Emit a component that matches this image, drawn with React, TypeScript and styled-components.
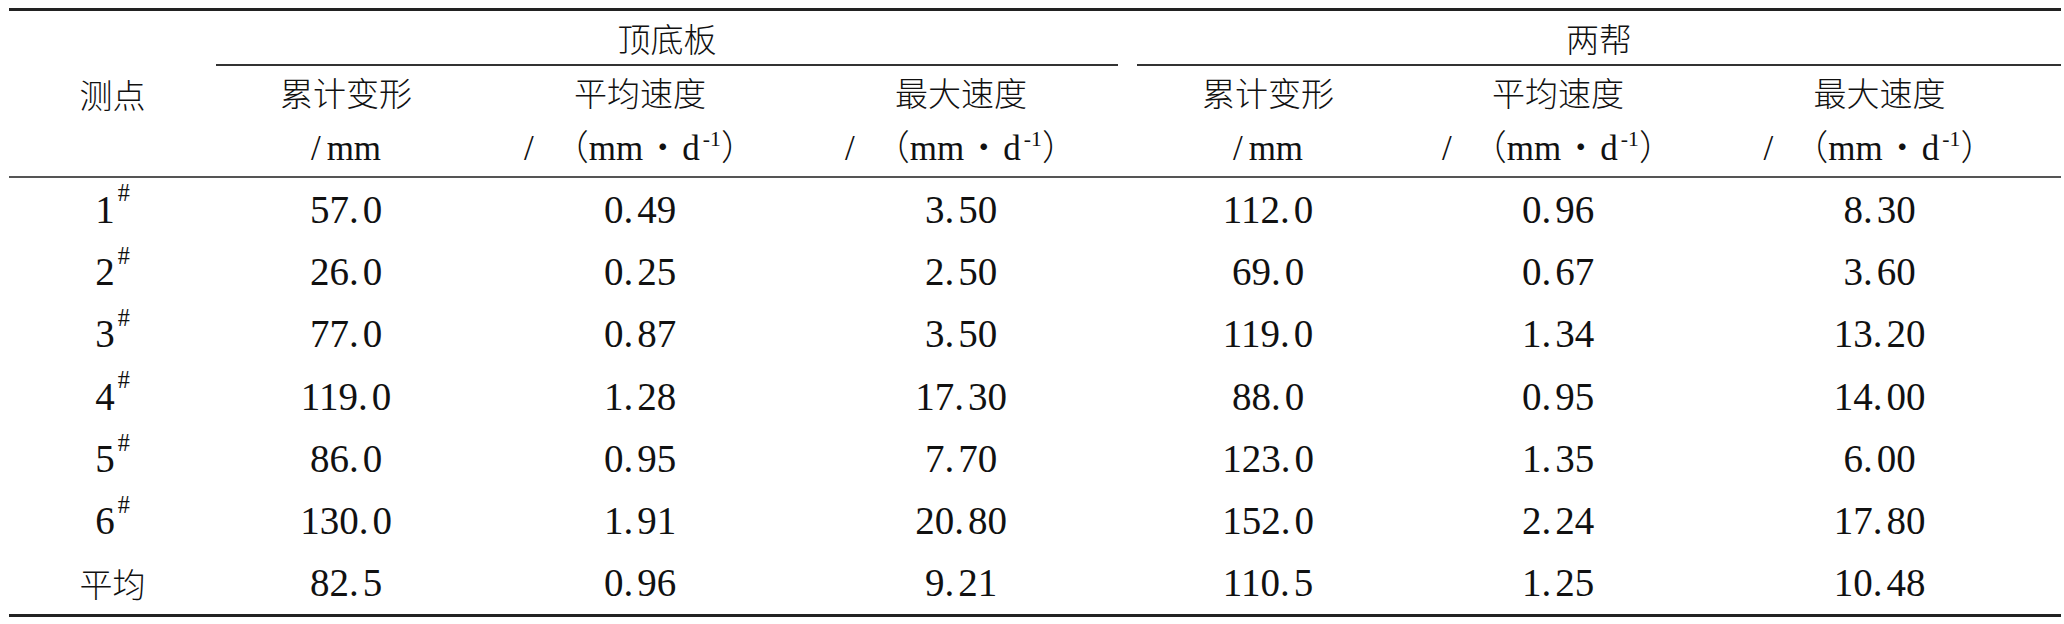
import styled, { createGlobalStyle } from "styled-components";

const GlobalStyle = createGlobalStyle`
  html, body {
    margin: 0;
    padding: 0;
    background: #fff;
  }
  body {
    font-family: "Liberation Serif", "Noto Sans CJK SC", serif;
    color: #111;
  }
`;

const Table = styled.div`
  display: grid;
  grid-template-columns: 207px 260px 328px 314px 300px 280px 363px;
  grid-template-rows: 55px 112px repeat(7, 62.3px);
  width: 2052px;
  margin: 8px 0 0 9px;
  border-top: 3px solid #222;
  border-bottom: 3px solid #222;
  font-size: 39px;
`;

const CornerCell = styled.div`
  grid-row: 1 / span 2;
  display: flex;
  align-items: center;
  justify-content: center;
  border-bottom: 2px solid #555;
  font-size: 33px;
  font-weight: 300;
`;

const GroupCell = styled.div<{ $inset: number }>`
  grid-column: span 3;
  display: flex;
  align-items: center;
  justify-content: center;
  margin-left: ${({ $inset }) => $inset}px;
  border-bottom: 2px solid #333;
  font-size: 33px;
  font-weight: 300;
`;

const HeadCell = styled.div`
  grid-row: 2;
  display: flex;
  flex-direction: column;
  align-items: center;
  padding-top: 2px;
  border-bottom: 2px solid #555;
`;

const HeadLine = styled.div<{ $unit?: boolean }>`
  height: 54px;
  line-height: 54px;
  font-size: ${({ $unit }) => ($unit ? 35 : 33)}px;
  font-weight: 300;
  white-space: nowrap;
`;

const Cell = styled.div`
  display: flex;
  align-items: center;
  justify-content: center;
  white-space: nowrap;
`;

const Label = styled.span`
  font-size: 33px;
  font-weight: 300;
`;

const Sup = styled.span`
  position: relative;
  top: -0.65em;
  margin-left: 3px;
  font-size: 0.62em;
`;

const Slash = styled.span`
  margin-right: 6px;
`;

const Gap = styled.span`
  display: inline-block;
  width: 20px;
`;

const MidDot = styled.span`
  margin: 0 2px;
`;

const Dot = styled.span`
  margin-right: 4px;
`;

const groups = [
  { name: "顶底板", inset: 0 },
  { name: "两帮", inset: 19 },
];

const heads = ["累计变形", "平均速度", "最大速度", "累计变形", "平均速度", "最大速度"];
const units = ["mm", "rate", "rate", "mm", "rate", "rate"];

const rows: { point: string; avg?: boolean; values: string[] }[] = [
  { point: "1", values: ["57.0", "0.49", "3.50", "112.0", "0.96", "8.30"] },
  { point: "2", values: ["26.0", "0.25", "2.50", "69.0", "0.67", "3.60"] },
  { point: "3", values: ["77.0", "0.87", "3.50", "119.0", "1.34", "13.20"] },
  { point: "4", values: ["119.0", "1.28", "17.30", "88.0", "0.95", "14.00"] },
  { point: "5", values: ["86.0", "0.95", "7.70", "123.0", "1.35", "6.00"] },
  { point: "6", values: ["130.0", "1.91", "20.80", "152.0", "2.24", "17.80"] },
  { point: "平均", avg: true, values: ["82.5", "0.96", "9.21", "110.5", "1.25", "10.48"] },
];

const Num = ({ value }: { value: string }) => {
  const [whole, frac] = value.split(".");
  return (
    <>
      {whole}
      <Dot>.</Dot>
      {frac}
    </>
  );
};

const Unit = ({ kind }: { kind: string }) =>
  kind === "mm" ? (
    <>
      <Slash>/</Slash>mm
    </>
  ) : (
    <>
      /<Gap />（mm<MidDot>・</MidDot>d<Sup>-1</Sup>）
    </>
  );

export default function App() {
  return (
    <>
      <GlobalStyle />
      <Table>
        <CornerCell>测点</CornerCell>
        {groups.map((g) => (
          <GroupCell key={g.name} $inset={g.inset}>
            {g.name}
          </GroupCell>
        ))}
        {heads.map((h, i) => (
          <HeadCell key={i}>
            <HeadLine>{h}</HeadLine>
            <HeadLine $unit>
              <Unit kind={units[i]} />
            </HeadLine>
          </HeadCell>
        ))}
        {rows.map((r) => [
          <Cell key={r.point}>
            {r.avg ? (
              <Label>{r.point}</Label>
            ) : (
              <>
                {r.point}
                <Sup>#</Sup>
              </>
            )}
          </Cell>,
          ...r.values.map((v, i) => (
            <Cell key={r.point + i}>
              <Num value={v} />
            </Cell>
          )),
        ])}
      </Table>
    </>
  );
}
